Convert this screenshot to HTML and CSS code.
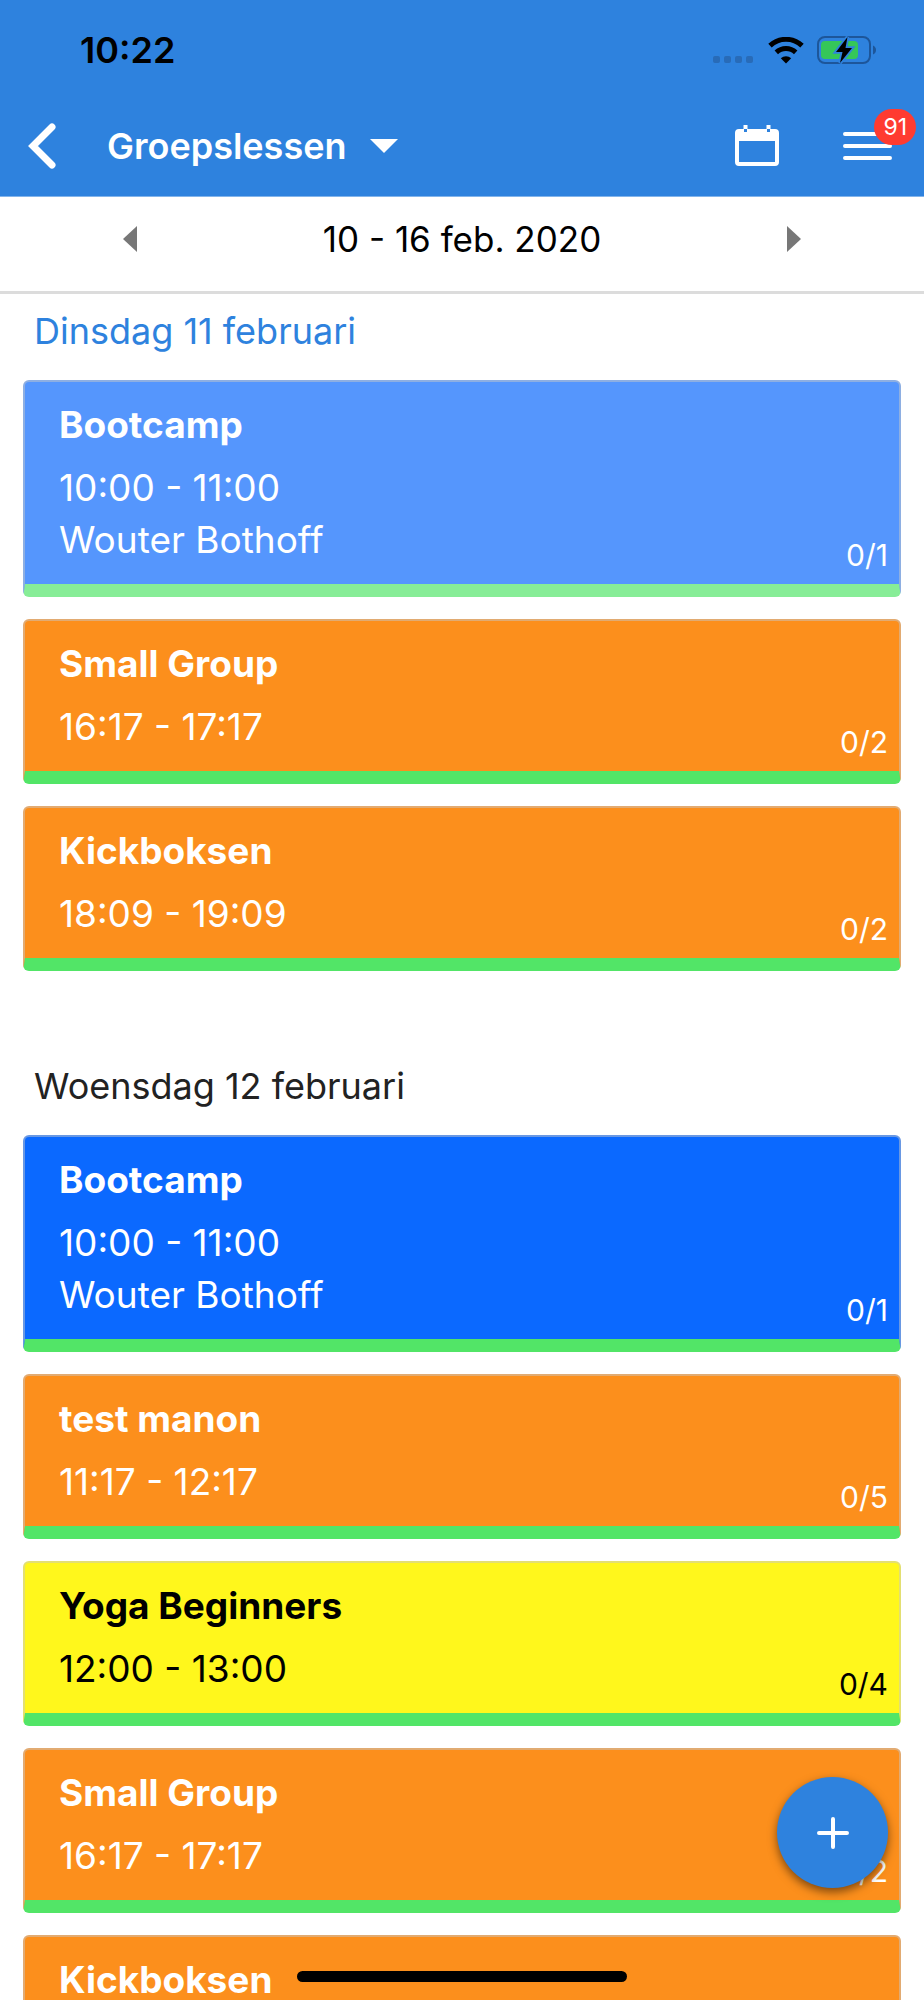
FILE: index.html
```html
<!DOCTYPE html>
<html lang="nl">

  <head>
    <meta charset="utf-8">
    <meta name="viewport" content="width=device-width, initial-scale=1">
    <title>Groepslessen</title>
    <link rel="stylesheet" href="styles.css">
  </head>

  <body>
    <header class="header">
      <div class="status-bar">
        <span class="status-time">10:22</span>

        <div class="status-icons">
          <svg class="signal-icon" width="42" height="27" viewBox="0 0 42 27">
            <rect x="0" y="19" width="7" height="7" rx="2"/>
            <rect x="11" y="19" width="7" height="7" rx="2"/>
            <rect x="22" y="19" width="7" height="7" rx="2"/>
            <rect x="33" y="19" width="7" height="7" rx="2"/>
          </svg>

          <svg class="wifi-icon" width="36" height="27" viewBox="0 0 36 27">
            <path d="M2 8.6 A23.5 23.5 0 0 1 34 8.6" fill="none" stroke="black" stroke-width="5"/>
            <path d="M8.3 15.4 A14.2 14.2 0 0 1 27.7 15.4" fill="none" stroke="black" stroke-width="5"/>
            <path d="M12.8 21.2 A8 8 0 0 1 23.2 21.2 L18 26.5 Z" fill="black"/>
          </svg>

          <svg class="battery-icon" width="60" height="28" viewBox="0 0 60 28">
            <rect x="1" y="1" width="52" height="26" rx="7" fill="none" stroke="#1d569a" stroke-width="2"/>
            <path d="M56 9.5 Q59 11 59 14 Q59 17 56 18.500 Z" fill="#1d569a"/>
            <rect x="4" y="5" width="37" height="18" rx="4" fill="#35c759"/>
            <path d="M30.500 1 L19 16 H25.500 L23 27 L35 12 H28.500 Z" fill="black" stroke="#2e82de" stroke-width="3.500" paint-order="stroke"/>
          </svg>
        </div>
      </div>

      <nav class="nav">
        <button class="icon-button" aria-label="Terug">
          <svg width="28" height="46" viewBox="0 0 28 46">
            <path d="M24 4 L5 23 L24 42" fill="none" stroke="white" stroke-width="7" stroke-linecap="round"/>
          </svg>
        </button>

        <button class="title-button">
          Groepslessen
          <svg width="28" height="14" viewBox="0 0 28 14">
            <path d="M0 0 H28 L14 14 Z" fill="white"/>
          </svg>
        </button>

        <button class="icon-button" aria-label="Kalender">
          <svg width="46" height="42" viewBox="0 0 46 42">
            <path fill="white" fill-rule="evenodd" d="M5 4 H41 Q45 4 45 8 V37 Q45 41 41 41 H5 Q1 41 1 37 V8 Q1 4 5 4 Z M5 16 V37 H41 V16 Z"/>
            <path d="M11.500 4 V7 M34.500 4 V7" stroke="#2e82de" stroke-width="3"/>
            <path d="M11.500 0 V4 M34.500 0 V4" stroke="white" stroke-width="4"/>
          </svg>
        </button>

        <button class="icon-button menu-button" aria-label="Menu">
          <svg width="49" height="30" viewBox="0 0 49 30">
            <path d="M2 3 H47 M2 15 H47 M2 27 H47" stroke="white" stroke-width="4" stroke-linecap="round"/>
          </svg>
          <span class="badge">91</span>
        </button>
      </nav>
    </header>

    <div class="week-bar">
      <button class="icon-button" aria-label="Vorige week">
        <svg width="14" height="26" viewBox="0 0 14 26">
          <path d="M14 0 V26 L0 13 Z" fill="#777"/>
        </svg>
      </button>
      <span class="week">10 - 16 feb. 2020</span>
      <button class="icon-button" aria-label="Volgende week">
        <svg width="14" height="26" viewBox="0 0 14 26">
          <path d="M0 0 V26 L14 13 Z" fill="#777"/>
        </svg>
      </button>
    </div>

    <main class="schedule">
      <section class="day">
        <h2 class="day-title today">Dinsdag 11 februari</h2>

        <a href="#" class="lesson blue past">
          <div class="lesson-info">
            <h3 class="lesson-name">Bootcamp</h3>
            <p class="lesson-text">10:00 - 11:00</p>
            <p class="lesson-text">Wouter Bothoff</p>
          </div>
          <span class="lesson-count">0/1</span>
        </a>

        <a href="#" class="lesson orange">
          <div class="lesson-info">
            <h3 class="lesson-name">Small Group</h3>
            <p class="lesson-text">16:17 - 17:17</p>
          </div>
          <span class="lesson-count">0/2</span>
        </a>

        <a href="#" class="lesson orange">
          <div class="lesson-info">
            <h3 class="lesson-name">Kickboksen</h3>
            <p class="lesson-text">18:09 - 19:09</p>
          </div>
          <span class="lesson-count">0/2</span>
        </a>
      </section>

      <section class="day">
        <h2 class="day-title">Woensdag 12 februari</h2>

        <a href="#" class="lesson blue">
          <div class="lesson-info">
            <h3 class="lesson-name">Bootcamp</h3>
            <p class="lesson-text">10:00 - 11:00</p>
            <p class="lesson-text">Wouter Bothoff</p>
          </div>
          <span class="lesson-count">0/1</span>
        </a>

        <a href="#" class="lesson orange">
          <div class="lesson-info">
            <h3 class="lesson-name">test manon</h3>
            <p class="lesson-text">11:17 - 12:17</p>
          </div>
          <span class="lesson-count">0/5</span>
        </a>

        <a href="#" class="lesson yellow">
          <div class="lesson-info">
            <h3 class="lesson-name">Yoga Beginners</h3>
            <p class="lesson-text">12:00 - 13:00</p>
          </div>
          <span class="lesson-count">0/4</span>
        </a>

        <a href="#" class="lesson orange">
          <div class="lesson-info">
            <h3 class="lesson-name">Small Group</h3>
            <p class="lesson-text">16:17 - 17:17</p>
          </div>
          <span class="lesson-count">0/2</span>
        </a>

        <a href="#" class="lesson orange">
          <div class="lesson-info">
            <h3 class="lesson-name">Kickboksen</h3>
          </div>
        </a>
      </section>
    </main>

    <button class="add-button" aria-label="Les toevoegen">
      <svg width="32" height="32" viewBox="0 0 32 32">
        <path d="M16 2 V30 M2 16 H30" stroke="white" stroke-width="4" stroke-linecap="round"/>
      </svg>
    </button>

    <div class="home-bar"></div>
  </body>

</html>
```

FILE: styles.css
```css
* {
  box-sizing: border-box;
}

body {
  display: flex;
  flex-direction: column;
  height: 100vh;
  margin: 0;
  overflow: hidden;
  background-color: white;
  color: black;
  font-family: Inter, "Liberation Sans", sans-serif;
}

h2, h3, p {
  margin: 0;
}

button {
  padding: 0;
  border: none;
  background-color: transparent;
  color: inherit;
  font-family: inherit;
  cursor: pointer;
}

svg {
  display: block;
}

/* header */
.header {
  background-color: #2e82de;
  border-bottom: 1px solid #82b4eb;
}

.status-bar {
  display: flex;
  justify-content: space-between;
  align-items: center;
  height: 100px;
  padding: 0 47px 0 80px;
}

.status-time {
  font-size: 36px;
  font-weight: 600;
}

.status-icons {
  display: flex;
  align-items: center;
  gap: 13px;
}

.signal-icon {
  fill: #286bb8;
}

.nav {
  display: flex;
  align-items: center;
  height: 96px;
  padding: 0 32px 4px 28px;
}

.title-button {
  display: flex;
  align-items: center;
  gap: 24px;
  margin: 0 auto 0 51px;
  color: white;
  font-size: 36px;
  font-weight: 600;
}

.menu-button {
  position: relative;
  margin-left: 63px;
}

.badge {
  position: absolute;
  top: -22px;
  right: -24px;
  padding: 0 9px;
  border-radius: 18px;
  background-color: #ff3b30;
  color: white;
  font-size: 23px;
  line-height: 36px;
}

/* week picker */
.week-bar {
  display: flex;
  justify-content: space-between;
  align-items: center;
  height: 97px;
  padding: 0 123px 10px;
  border-bottom: 3px solid #dcdcdc;
}

.week {
  font-size: 35px;
}

/* lessons */
.schedule {
  flex: 1;
  min-height: 0;
  overflow-y: auto;
  padding: 14px 23px;
  scrollbar-width: none;
}

.day {
  margin-bottom: 92px;
}

.day-title {
  margin: 0 11px 26px;
  color: #222;
  font-size: 36px;
  font-weight: 400;
  line-height: 46px;
}

.today {
  color: #2e82de;
}

.lesson {
  display: flex;
  justify-content: space-between;
  align-items: flex-end;
  margin-bottom: 22px;
  border: 2px solid rgba(200, 200, 200, 0.5);
  border-bottom: 13px solid #52e567;
  border-radius: 6px;
  color: white;
  text-decoration: none;
}

.lesson-info {
  padding: 20px 0 18px 34px;
}

.lesson-name {
  margin-bottom: 14px;
  font-size: 37px;
  font-weight: 700;
  line-height: 46px;
}

.lesson-text {
  font-size: 37px;
  line-height: 52px;
}

.lesson-count {
  padding: 0 11px 11px 0;
  font-size: 30px;
  line-height: 36px;
}

.blue {
  background-color: #0b69ff;
}

.blue.past {
  background-color: #5596fd;
  border-bottom-color: #87ed97;
}

.orange {
  background-color: #fc8f1c;
}

.yellow {
  background-color: #fff71c;
  color: black;
}

/* things floating over the list */
.add-button {
  position: fixed;
  right: 36px;
  bottom: 112px;
  display: flex;
  justify-content: center;
  align-items: center;
  width: 111px;
  height: 111px;
  border-radius: 50%;
  background-color: #2e82de;
  box-shadow: 0 4px 10px rgba(0, 0, 0, 0.5);
}

.home-bar {
  position: fixed;
  bottom: 18px;
  left: 50%;
  width: 330px;
  height: 11px;
  border-radius: 6px;
  background-color: black;
  transform: translateX(-50%);
}
```
